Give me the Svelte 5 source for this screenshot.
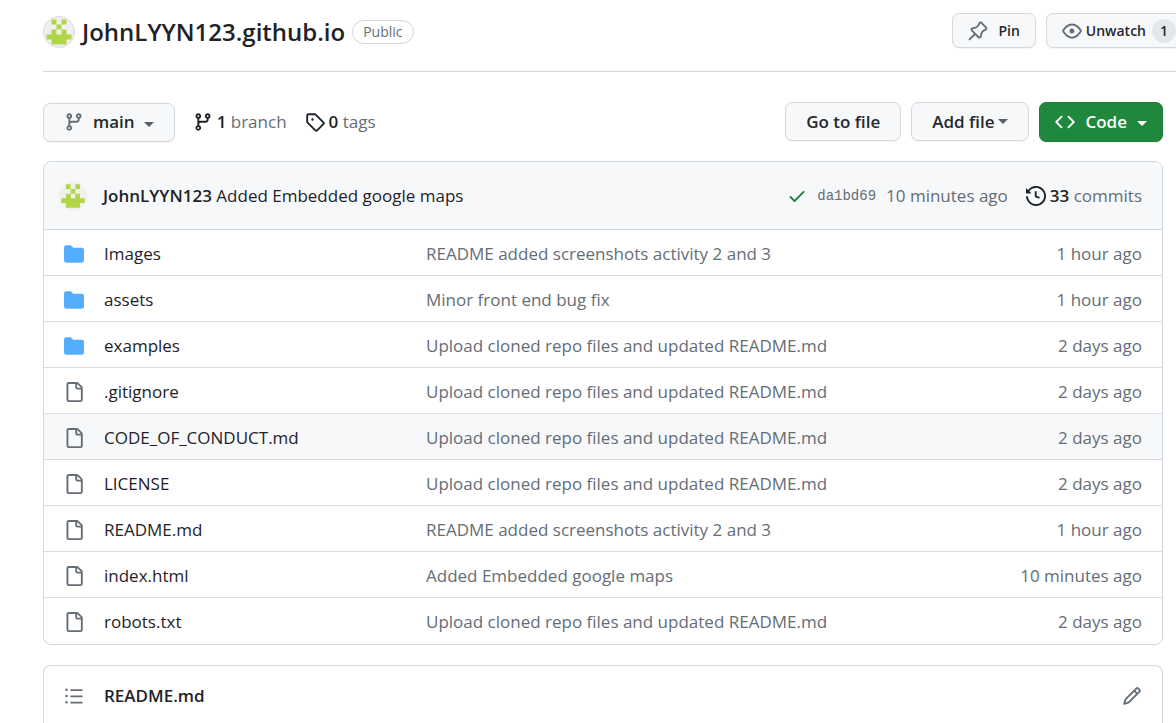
<script>
  const paths = {
    branch: 'M9.5 3.25a2.25 2.25 0 1 1 3 2.122V6A2.5 2.5 0 0 1 10 8.5H6a1 1 0 0 0-1 1v1.128a2.251 2.251 0 1 1-1.5 0V5.372a2.25 2.25 0 1 1 1.5 0v1.836A2.493 2.493 0 0 1 6 7h4a1 1 0 0 0 1-1v-.628A2.25 2.25 0 0 1 9.5 3.25Zm-6 0a.75.75 0 1 0 1.5 0 .75.75 0 0 0-1.5 0Zm8.25-.75a.75.75 0 1 0 0 1.5.75.75 0 0 0 0-1.5ZM4.25 12a.75.75 0 1 0 0 1.5.75.75 0 0 0 0-1.5Z',
    tag: 'M1 7.775V2.75C1 1.784 1.784 1 2.75 1h5.025c.464 0 .91.184 1.238.513l6.25 6.25a1.75 1.75 0 0 1 0 2.474l-5.026 5.026a1.75 1.75 0 0 1-2.474 0l-6.25-6.25A1.752 1.752 0 0 1 1 7.775Zm1.5 0c0 .066.026.13.073.177l6.25 6.25a.25.25 0 0 0 .354 0l5.025-5.025a.25.25 0 0 0 0-.354l-6.25-6.25a.25.25 0 0 0-.177-.073H2.75a.25.25 0 0 0-.25.25ZM6 5a1 1 0 1 1 0 2 1 1 0 0 1 0-2Z',
    eye: 'M8 2c1.981 0 3.671.992 4.933 2.078 1.27 1.091 2.187 2.345 2.637 3.023a1.62 1.62 0 0 1 0 1.798c-.45.678-1.367 1.932-2.637 3.023C11.67 13.008 9.981 14 8 14c-1.981 0-3.671-.992-4.933-2.078C1.797 10.83.88 9.576.43 8.898a1.62 1.62 0 0 1 0-1.798c.45-.677 1.367-1.931 2.637-3.022C4.33 2.992 6.019 2 8 2ZM1.679 7.932a.12.12 0 0 0 0 .136c.411.622 1.241 1.75 2.366 2.717C5.176 11.758 6.527 12.5 8 12.5c1.473 0 2.825-.742 3.955-1.715 1.124-.967 1.954-2.096 2.366-2.717a.12.12 0 0 0 0-.136c-.412-.621-1.242-1.75-2.366-2.717C10.824 4.242 9.473 3.5 8 3.5c-1.473 0-2.825.742-3.955 1.715-1.124.967-1.954 2.096-2.366 2.717ZM8 10a2 2 0 1 1-.001-3.999A2 2 0 0 1 8 10Z',
    pin: 'm11.294.984 3.722 3.722a1.75 1.75 0 0 1-.504 2.826l-1.327.613a3.089 3.089 0 0 0-1.707 2.084l-.584 2.454c-.317 1.332-1.972 1.8-2.94.832L5.75 11.311 1.78 15.28a.749.749 0 1 1-1.06-1.06l3.969-3.97-2.204-2.204c-.968-.968-.5-2.623.832-2.94l2.454-.584a3.08 3.08 0 0 0 2.084-1.707l.613-1.327a1.75 1.75 0 0 1 2.826-.504ZM6.283 9.723l2.732 2.731a.25.25 0 0 0 .42-.119l.584-2.454a4.586 4.586 0 0 1 2.537-3.098l1.328-.613a.25.25 0 0 0 .072-.404l-3.722-3.722a.25.25 0 0 0-.404.072l-.613 1.328a4.584 4.584 0 0 1-3.098 2.537l-2.454.584a.25.25 0 0 0-.119.42l2.731 2.732Z',
    code: 'm11.28 3.22 4.25 4.25a.75.75 0 0 1 0 1.06l-4.25 4.25a.749.749 0 0 1-1.275-.326.749.749 0 0 1 .215-.734L13.94 8l-3.72-3.72a.749.749 0 0 1 .326-1.275.749.749 0 0 1 .734.215Zm-6.56 0a.751.751 0 0 1 1.042.018.751.751 0 0 1 .018 1.042L2.06 8l3.72 3.72a.749.749 0 0 1-.326 1.275.749.749 0 0 1-.734-.215L.47 8.53a.75.75 0 0 1 0-1.06Z',
    check: 'M13.78 4.22a.75.75 0 0 1 0 1.06l-7.25 7.25a.75.75 0 0 1-1.06 0L2.22 9.28a.751.751 0 0 1 .018-1.042.751.751 0 0 1 1.042-.018L6 10.94l6.72-6.72a.75.75 0 0 1 1.06 0Z',
    history: 'm.427 1.927 1.215 1.215a8.002 8.002 0 1 1-1.6 5.685.75.75 0 1 1 1.493-.154 6.5 6.5 0 1 0 1.18-4.458l1.358 1.358A.25.25 0 0 1 3.896 6H.25A.25.25 0 0 1 0 5.75V2.104a.25.25 0 0 1 .427-.177ZM7.75 4a.75.75 0 0 1 .75.75v2.992l2.028.812a.75.75 0 0 1-.557 1.392l-2.5-1A.751.751 0 0 1 7 8.25v-3.5A.75.75 0 0 1 7.75 4Z',
    folder: 'M1.75 1A1.75 1.75 0 0 0 0 2.75v10.5C0 14.216.784 15 1.75 15h12.5A1.75 1.75 0 0 0 16 13.25v-8.5A1.75 1.75 0 0 0 14.25 3H7.5a.25.25 0 0 1-.2-.1l-.9-1.2C6.07 1.26 5.55 1 5 1H1.75Z',
    file: 'M2 1.75C2 .784 2.784 0 3.75 0h6.586c.464 0 .909.184 1.237.513l2.914 2.914c.329.328.513.773.513 1.237v9.586A1.75 1.75 0 0 1 13.25 16h-9.5A1.75 1.75 0 0 1 2 14.25Zm1.75-.25a.25.25 0 0 0-.25.25v12.5c0 .138.112.25.25.25h9.5a.25.25 0 0 0 .25-.25V6h-2.75A1.75 1.75 0 0 1 9 4.25V1.5Zm6.75.062V4.25c0 .138.112.25.25.25h2.688l-.011-.013-2.914-2.914-.013-.011Z',
    list: 'M5.75 2.5h8.5a.75.75 0 0 1 0 1.5h-8.5a.75.75 0 0 1 0-1.5Zm0 5h8.5a.75.75 0 0 1 0 1.5h-8.5a.75.75 0 0 1 0-1.5Zm0 5h8.5a.75.75 0 0 1 0 1.5h-8.5a.75.75 0 0 1 0-1.5ZM2 14a1 1 0 1 1 0-2 1 1 0 0 1 0 2Zm1-6a1 1 0 1 1-2 0 1 1 0 0 1 2 0ZM2 4a1 1 0 1 1 0-2 1 1 0 0 1 0 2Z',
    pencil: 'M11.013 1.427a1.75 1.75 0 0 1 2.474 0l1.086 1.086a1.75 1.75 0 0 1 0 2.474l-8.61 8.61c-.21.21-.47.364-.756.445l-3.251.93a.75.75 0 0 1-.927-.928l.929-3.25c.081-.286.235-.547.445-.758l8.61-8.61Zm.176 4.823L9.75 4.81l-6.286 6.287a.253.253 0 0 0-.064.108l-.558 1.953 1.953-.558a.253.253 0 0 0 .108-.064Zm1.238-3.763a.25.25 0 0 0-.354 0L10.811 3.75l1.439 1.44 1.263-1.263a.25.25 0 0 0 0-.354Z'
  };

  const upload = 'Upload cloned repo files and updated README.md';
  const shots = 'README added screenshots activity 2 and 3';
  const files = [
    { kind: 'folder', name: 'Images', message: shots, age: '1 hour ago' },
    { kind: 'folder', name: 'assets', message: 'Minor front end bug fix', age: '1 hour ago' },
    { kind: 'folder', name: 'examples', message: upload, age: '2 days ago' },
    { kind: 'file', name: '.gitignore', message: upload, age: '2 days ago' },
    { kind: 'file', name: 'CODE_OF_CONDUCT.md', message: upload, age: '2 days ago', active: true },
    { kind: 'file', name: 'LICENSE', message: upload, age: '2 days ago' },
    { kind: 'file', name: 'README.md', message: shots, age: '1 hour ago' },
    { kind: 'file', name: 'index.html', message: 'Added Embedded google maps', age: '10 minutes ago' },
    { kind: 'file', name: 'robots.txt', message: upload, age: '2 days ago' }
  ];
</script>

{#snippet icon(name, tone = '')}
  <svg class="icon {tone}" viewBox="0 0 16 16" aria-hidden="true"><path d={paths[name]} /></svg>
{/snippet}

{#snippet avatar(size)}
  <svg class="avatar {size}" viewBox="0 0 32 32" aria-hidden="true">
    <circle class="disc" cx="16" cy="16" r="15.5" />
    <path fill="#b0d645" d="M8.5 3.5h5v5h-5ZM18.5 3.5h5v5h-5ZM13.5 8.5h5v5h-5ZM8.5 13.5h5v5h5v-5h5v5h5v5h-5v5h-15v-5h-5v-5h5Z" />
  </svg>
{/snippet}

<header class="repo-head">
  {@render avatar('large')}
  <h1><a href="#repo">JohnLYYN123.github.io</a></h1>
  <span class="badge">Public</span>
  <div class="head-actions">
    <button class="btn small pin">{@render icon('pin', 'muted')}Pin</button>
    <button class="btn small watch">{@render icon('eye', 'muted')}Unwatch<span class="counter">1</span></button>
  </div>
</header>

<main>
  <div class="toolbar">
    <button class="btn branch">{@render icon('branch', 'muted')}main<span class="caret"></span></button>
    <a class="stat" href="#branches">{@render icon('branch')}<span><strong>1</strong> branch</span></a>
    <a class="stat" href="#tags">{@render icon('tag')}<span><strong>0</strong> tags</span></a>
    <div class="tool-actions">
      <button class="btn">Go to file</button>
      <button class="btn add">Add file<span class="caret"></span></button>
      <button class="btn code">{@render icon('code')}Code<span class="caret"></span></button>
    </div>
  </div>

  <section class="box">
    <div class="commit">
      {@render avatar('medium')}
      <p><a class="author" href="#author">JohnLYYN123</a> <a href="#commit">Added Embedded google maps</a></p>
      <div class="commit-meta">
        {@render icon('check', 'success')}
        <a class="sha" href="#sha">da1bd69</a>
        <span>10 minutes ago</span>
        <a class="commits" href="#commits">{@render icon('history')}<span><strong>33</strong> commits</span></a>
      </div>
    </div>
    <table>
      <tbody>
        {#each files as f}
          <tr class:active={f.active}>
            <td class="kind">{@render icon(f.kind, f.kind === 'folder' ? 'folder' : 'muted')}</td>
            <td class="name"><a href="#{f.name}">{f.name}</a></td>
            <td class="message"><a href="#commit">{f.message}</a></td>
            <td class="when">{f.age}</td>
          </tr>
        {/each}
      </tbody>
    </table>
  </section>

  <section class="box readme">
    <button class="plain" aria-label="Outline">{@render icon('list', 'muted')}</button>
    <h2>README.md</h2>
    <button class="plain edit" aria-label="Edit">{@render icon('pencil', 'muted')}</button>
  </section>
</main>

<style>
  :global(body) {
    background: #fff;
    color: #1f2328;
    font: 17px/26px "Open Sans", "Noto Sans", sans-serif;
    overflow-x: hidden;
  }
  :global(html) { scrollbar-width: none; }
  a { color: inherit; text-decoration: none; }
  h1, h2, p { margin: 0; }
  strong { font-weight: 600; color: #1f2328; }
  .icon { width: 20px; height: 20px; flex: none; display: block; fill: currentColor; }
  .icon.muted { color: #656d76; }
  .icon.folder { color: #54aeff; }
  .icon.success { color: #1a7f37; }
  .avatar { flex: none; }
  .disc { fill: #f0f0f0; }
  .avatar.large { width: 32px; height: 32px; }
  .large .disc { stroke: #d9dbdd; }
  .avatar.medium { width: 30px; height: 30px; }

  .repo-head {
    display: flex;
    align-items: center;
    margin-left: 43px;
    height: 48px;
    padding: 8px 0 15px;
    border-bottom: 1px solid #d0d7de;
  }
  .repo-head h1 { margin: 0 7px; font-size: 24px; line-height: 32px; font-weight: 600; white-space: nowrap; }
  .badge {
    padding: 0 10px;
    border: 1px solid #d0d7de;
    border-radius: 12px;
    color: #656d76;
    font-size: 14px;
    line-height: 22px;
    font-weight: 500;
  }
  .head-actions { display: flex; gap: 10px; margin: -3px -16px 0 auto; }

  .btn {
    display: flex;
    align-items: center;
    box-sizing: border-box;
    height: 39px;
    padding: 0 20px;
    border: 1px solid #d4d8dd;
    border-radius: 7px;
    background: #f6f8fa;
    box-shadow: 0 1px 0 rgba(31, 35, 40, 0.04);
    color: #24292f;
    font: 600 17px/26px "Open Sans", "Noto Sans", sans-serif;
    white-space: nowrap;
  }
  .btn.small { height: 35px; padding: 0 15px; font-size: 14px; }
  .pin { gap: 10px; }
  .watch { gap: 4px; }
  .counter {
    box-sizing: border-box;
    min-width: 24px;
    margin-left: 2px;
    border-radius: 12px;
    background: #e4e7ea;
    line-height: 24px;
    text-align: center;
  }
  .caret {
    border: 5px solid transparent;
    border-top-color: #57606a;
    border-bottom: 0;
  }
  .branch { gap: 9px; }
  .branch .caret { margin-top: 4px; }
  .add { gap: 4px; }
  .code { gap: 10px; height: 40px; padding: 0 15px; border-color: #1f7f3a; background: #1f883d; color: #fff; }
  .code .caret { border-top-color: #fff; margin-top: 2px; }

  main { padding: 30px 13px 0 43px; }
  .toolbar { display: flex; align-items: center; margin-bottom: 19px; }
  .stat { display: flex; align-items: center; gap: 4px; margin-left: 18px; color: #656d76; white-space: nowrap; }
  .stat :global(.icon) { color: #1f2328; }
  .tool-actions { display: flex; gap: 10px; margin-left: auto; }

  .box { border: 1px solid #d0d7de; border-radius: 8px; }
  .commit {
    display: flex;
    align-items: center;
    min-height: 67px;
    padding: 0 20px 0 14px;
    border-bottom: 1px solid #d0d7de;
    border-radius: 7px 7px 0 0;
    background: #f6f8fa;
  }
  .commit p { margin-left: 15px; }
  .author { font-weight: 600; }
  .commit-meta { display: flex; align-items: center; margin-left: auto; color: #656d76; white-space: nowrap; }
  .sha { margin: 0 10px; font: 14px/26px "Liberation Mono", monospace; }
  .commits { display: flex; align-items: center; gap: 4px; margin-left: 18px; }
  .commits :global(.icon) { color: #1f2328; }

  table { width: 100%; border-collapse: separate; border-spacing: 0; table-layout: fixed; }
  td { height: 43px; padding: 2px 0 0; border-bottom: 1px solid #d8dee4; white-space: nowrap; }
  tr:last-child td { height: 44px; border-bottom: 0; }
  tr.active { background: #f6f8fa; }
  .kind { width: 60px; }
  .kind :global(.icon) { margin-left: 20px; }
  .name { width: 322px; }
  .message { color: #656d76; }
  .when { width: 160px; padding-right: 20px; color: #656d76; text-align: right; }

  .readme { display: flex; align-items: center; min-height: 60px; margin-top: 20px; padding: 0 20px; border-bottom: 0; border-radius: 8px 8px 0 0; }
  .readme h2 { margin-left: 20px; font-size: 17px; line-height: 26px; font-weight: 600; }
  .plain { padding: 0; border: 0; background: none; }
  .edit { margin-left: auto; }
</style>
